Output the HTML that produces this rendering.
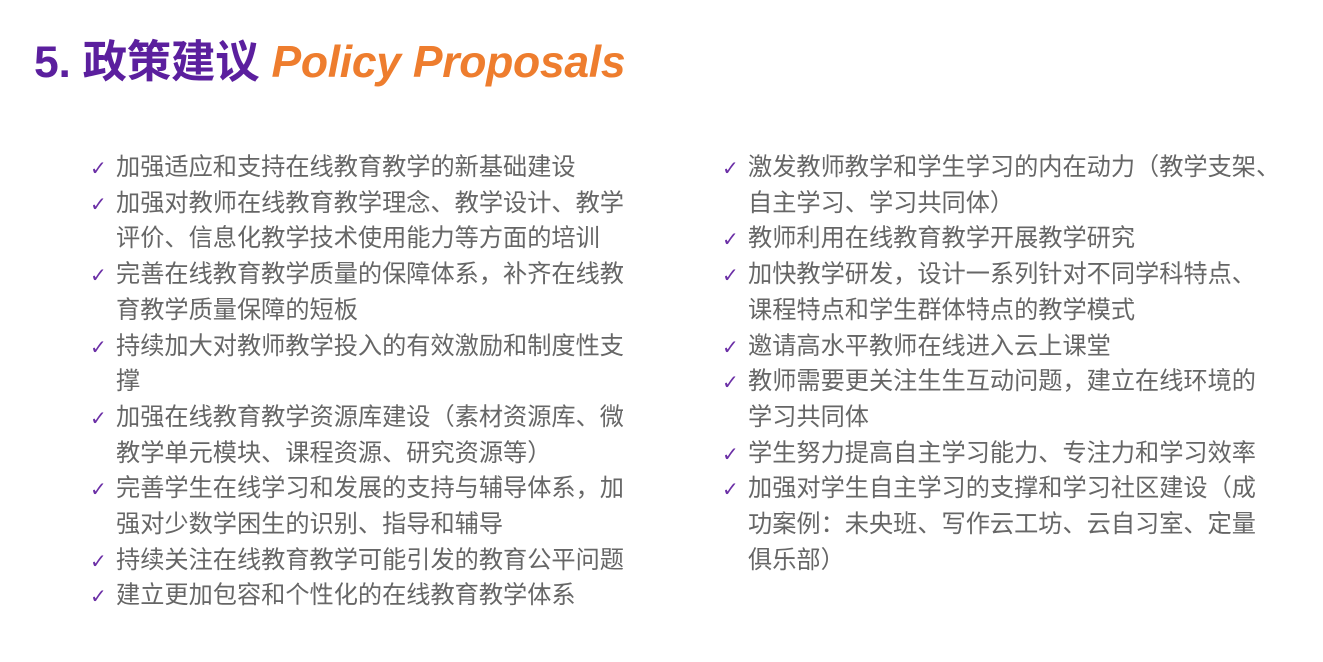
<!DOCTYPE html>
<html><head><meta charset="utf-8"><style>
body{margin:0;width:1323px;height:662px;background:#fff;overflow:hidden;font-family:"Liberation Sans","Noto Sans CJK SC",sans-serif;}
.t{position:absolute;left:34px;top:25px;font-size:44.5px;font-weight:bold;white-space:nowrap;letter-spacing:-0.3px}
.t .a{color:#5b1f9e}.t .b{color:#ee7d2e;font-style:italic}
.col{position:absolute;top:150px;font-size:24.2px;line-height:35.7px;color:#666;white-space:nowrap}
.col div{position:relative;padding-left:26px}
.col div:before{content:"✓";position:absolute;left:0;top:1px;color:#6b2fa6;font-size:20px;font-family:"DejaVu Sans",sans-serif}
</style></head><body>
<div class="t"><span class="a">5. 政策建议</span> <span class="b">Policy Proposals</span></div>
<div class="col" style="left:90px">
<div>加强适应和支持在线教育教学的新基础建设</div>
<div>加强对教师在线教育教学理念、教学设计、教学<br>评价、信息化教学技术使用能力等方面的培训</div>
<div>完善在线教育教学质量的保障体系，补齐在线教<br>育教学质量保障的短板</div>
<div>持续加大对教师教学投入的有效激励和制度性支<br>撑</div>
<div>加强在线教育教学资源库建设（素材资源库、微<br>教学单元模块、课程资源、研究资源等）</div>
<div>完善学生在线学习和发展的支持与辅导体系，加<br>强对少数学困生的识别、指导和辅导</div>
<div>持续关注在线教育教学可能引发的教育公平问题</div>
<div>建立更加包容和个性化的在线教育教学体系</div>
</div>
<div class="col" style="left:722px">
<div>激发教师教学和学生学习的内在动力（教学支架、<br>自主学习、学习共同体）</div>
<div>教师利用在线教育教学开展教学研究</div>
<div>加快教学研发，设计一系列针对不同学科特点、<br>课程特点和学生群体特点的教学模式</div>
<div>邀请高水平教师在线进入云上课堂</div>
<div>教师需要更关注生生互动问题，建立在线环境的<br>学习共同体</div>
<div>学生努力提高自主学习能力、专注力和学习效率</div>
<div>加强对学生自主学习的支撑和学习社区建设（成<br>功案例：未央班、写作云工坊、云自习室、定量<br>俱乐部）</div>
</div>
</body></html>
